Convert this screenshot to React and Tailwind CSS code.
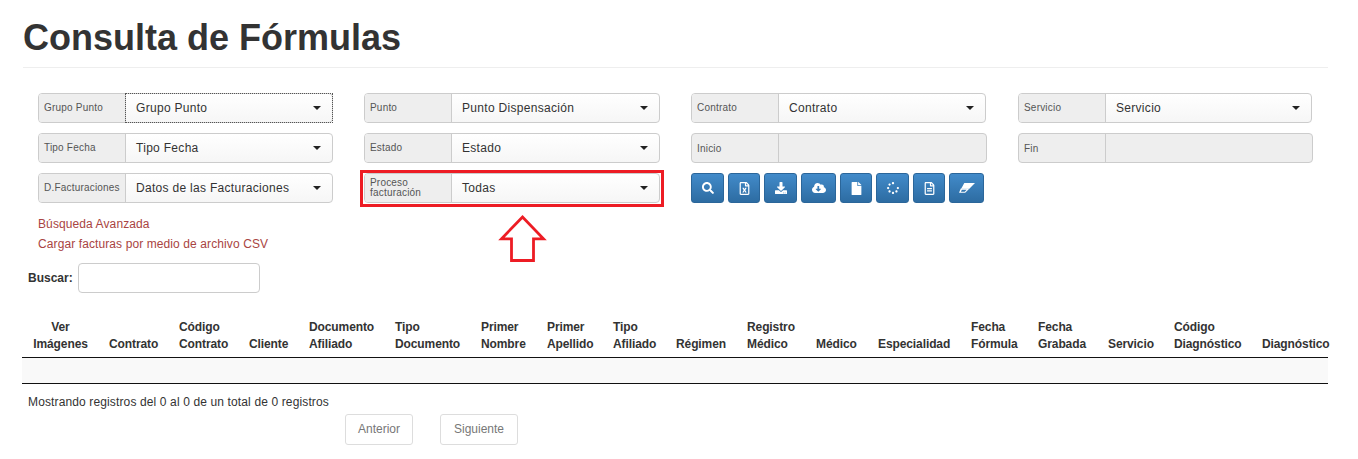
import React from 'react';
import { FaSearch, FaRegFileExcel, FaDownload, FaCloudDownloadAlt, FaFile, FaSpinner, FaRegFileAlt } from 'react-icons/fa';

const columns = [
  { w: 77, top: 'Ver', bottom: 'Imágenes', center: true },
  { w: 70, bottom: 'Contrato' },
  { w: 70, top: 'Código', bottom: 'Contrato' },
  { w: 60, bottom: 'Cliente' },
  { w: 86, top: 'Documento', bottom: 'Afiliado' },
  { w: 86, top: 'Tipo', bottom: 'Documento' },
  { w: 66, top: 'Primer', bottom: 'Nombre' },
  { w: 66, top: 'Primer', bottom: 'Apellido' },
  { w: 63, top: 'Tipo', bottom: 'Afiliado' },
  { w: 71, bottom: 'Régimen' },
  { w: 69, top: 'Registro', bottom: 'Médico' },
  { w: 62, bottom: 'Médico' },
  { w: 93, bottom: 'Especialidad' },
  { w: 67, top: 'Fecha', bottom: 'Fórmula' },
  { w: 70, top: 'Fecha', bottom: 'Grabada' },
  { w: 66, bottom: 'Servicio' },
  { w: 88, top: 'Código', bottom: 'Diagnóstico' },
  { w: 76, bottom: 'Diagnóstico' },
];

function Eraser({ size }) {
  return (
    <svg width={size} height={size * 0.62} viewBox="0 0 18 11" fill="#fff">
      <path d="M6 0 H18 L11.6 6.4 H2.4 Z" />
      <path d="M2 6 L11.8 6 L7 11 H0 Z M3.2 7.4 L2.2 9.7 H6.4 L8.6 7.4 Z" fillRule="evenodd" />
    </svg>
  );
}

const tools = [
  { icon: FaSearch, w: 'w-[33px]', size: 12 },
  { icon: FaRegFileExcel, w: 'w-[32px]', size: 13 },
  { icon: FaDownload, w: 'w-[33px]', size: 12 },
  { icon: FaCloudDownloadAlt, w: 'w-[35px]', size: 14 },
  { icon: FaFile, w: 'w-[32px]', size: 13 },
  { icon: FaSpinner, w: 'w-[33px]', size: 12 },
  { icon: FaRegFileAlt, w: 'w-[32px]', size: 13 },
  { icon: Eraser, w: 'w-[35px]', size: 16 },
];

function Field({ label, value, focused, className = '' }) {
  return (
    <div className={`flex h-[30px] rounded-[4px] border border-[#ccc] bg-gradient-to-b from-white to-[#f6f6f6] ${className}`}>
      <span className="flex w-[87px] shrink-0 items-center rounded-l-[3px] border-r border-[#ccc] bg-[#eee] pl-[5px] text-[10px] leading-[10px] tracking-[0.2px] text-[#555]">
        {label}
      </span>
      <div className={`flex flex-1 items-center justify-between pl-[10px] pr-[11px] text-[12px] tracking-[0.3px] text-[#333] ${focused ? 'outline-1 outline-dotted outline-[#555]' : ''}`}>
        <span>{value}</span>
        <span className="h-0 w-0 border-x-[4px] border-t-[4px] border-x-transparent border-t-[#222]" />
      </div>
    </div>
  );
}

function DateField({ label, className = '' }) {
  return (
    <div className={`flex h-[30px] rounded-[4px] border border-[#ccc] bg-[#eee] ${className}`}>
      <span className="flex w-[87px] shrink-0 items-center border-r border-[#ccc] pl-[5px] text-[10px] tracking-[0.2px] text-[#555]">{label}</span>
    </div>
  );
}

export default function App() {
  return (
    <div className="relative h-[459px] overflow-hidden bg-white pl-[23px] pr-[30px] font-['Liberation_Sans',Arial,sans-serif] text-[#333]">
      <h1 className="pt-[18px] text-[36px] leading-[40px] font-bold">Consulta de Fórmulas</h1>
      <hr className="mt-[9px] border-t border-[#eee]" />

      <div className="mt-[25px] ml-[15px] grid w-[1274px] grid-cols-[295px_296px_295px_295px] gap-x-[31px] gap-y-[10px]">
        <Field label="Grupo Punto" value="Grupo Punto" focused />
        <Field label="Punto" value="Punto Dispensación" />
        <Field label="Contrato" value="Contrato" />
        <Field label="Servicio" value="Servicio" className="ml-px" />
        <Field label="Tipo Fecha" value="Tipo Fecha" />
        <Field label="Estado" value="Estado" />
        <DateField label="Inicio" className="-mr-px" />
        <DateField label="Fin" className="ml-px -mr-px" />
        <Field label="D.Facturaciones" value="Datos de las Facturaciones" />
        <Field label={<span>Proceso<br />facturación</span>} value="Todas" />
        <div className="col-span-2 flex gap-[4px]">
          {tools.map(({ icon: Icon, w, size }, i) => (
            <button
              key={i}
              className={`flex h-[30px] ${w} items-center justify-center rounded-[3px] border border-[#2b669a] bg-gradient-to-b from-[#428bca] to-[#2d6ca2] text-white`}
            >
              <Icon size={size} />
            </button>
          ))}
        </div>
      </div>

      <div className="mt-[14px] ml-[15px] flex flex-col gap-[6px] text-[12px] leading-[14px] tracking-[0.1px] text-[#a94442]">
        <a>Búsqueda Avanzada</a>
        <a>Cargar facturas por medio de archivo CSV</a>
      </div>

      <div className="mt-[12px] ml-[5px] flex items-center gap-[5px]">
        <label className="text-[12px] font-bold">Buscar:</label>
        <input className="h-[30px] w-[182px] rounded-[4px] border border-[#ccc] bg-white" />
      </div>

      <div className="mt-[24px] -ml-px w-[1306px]">
        <table className="w-[1306px] table-fixed border-collapse text-[12px] leading-[17px] tracking-[-0.1px]">
          <colgroup>
            {columns.map((c, i) => <col key={i} style={{ width: c.w }} />)}
          </colgroup>
          <thead>
            <tr className="h-[40px] border-b border-[#111]">
              {columns.map((c, i) => (
                <th key={i} className={`pl-[10px] pb-[4px] align-bottom font-bold whitespace-nowrap ${c.center ? 'pr-[10px] text-center' : 'text-left'}`}>
                  {c.top && <div>{c.top}</div>}
                  <div>{c.bottom}</div>
                </th>
              ))}
            </tr>
          </thead>
          <tbody>
            <tr className="h-[26px] border-b border-[#111] bg-[#f9f9f9]">
              <td colSpan={columns.length} />
            </tr>
          </tbody>
        </table>
      </div>

      <p className="mt-[11px] ml-[5px] text-[12px] leading-[14px] tracking-[0.13px]">Mostrando registros del 0 al 0 de un total de 0 registros</p>

      <div className="mt-[5px] ml-[322px] flex gap-[27px] text-[12px] text-[#777]">
        <button className="h-[31px] w-[68px] rounded-[3px] border border-[#ddd] bg-white">Anterior</button>
        <button className="h-[31px] w-[78px] rounded-[3px] border border-[#ddd] bg-white">Siguiente</button>
      </div>

      {/* red highlight added over the screenshot */}
      <div className="absolute left-[360px] top-[170px] h-[37px] w-[304px] border-[3px] border-[#ed1c24]" />
      <svg className="absolute left-[498px] top-[214px]" width="50" height="50" viewBox="0 0 50 50" fill="#fff" stroke="#ed1c24" strokeWidth="2.8">
        <path d="M24.5 3 L45.5 24.8 L35.5 24.8 L35.5 46.5 L13.5 46.5 L13.5 24.8 L3.5 24.8 Z" />
      </svg>
    </div>
  );
}
